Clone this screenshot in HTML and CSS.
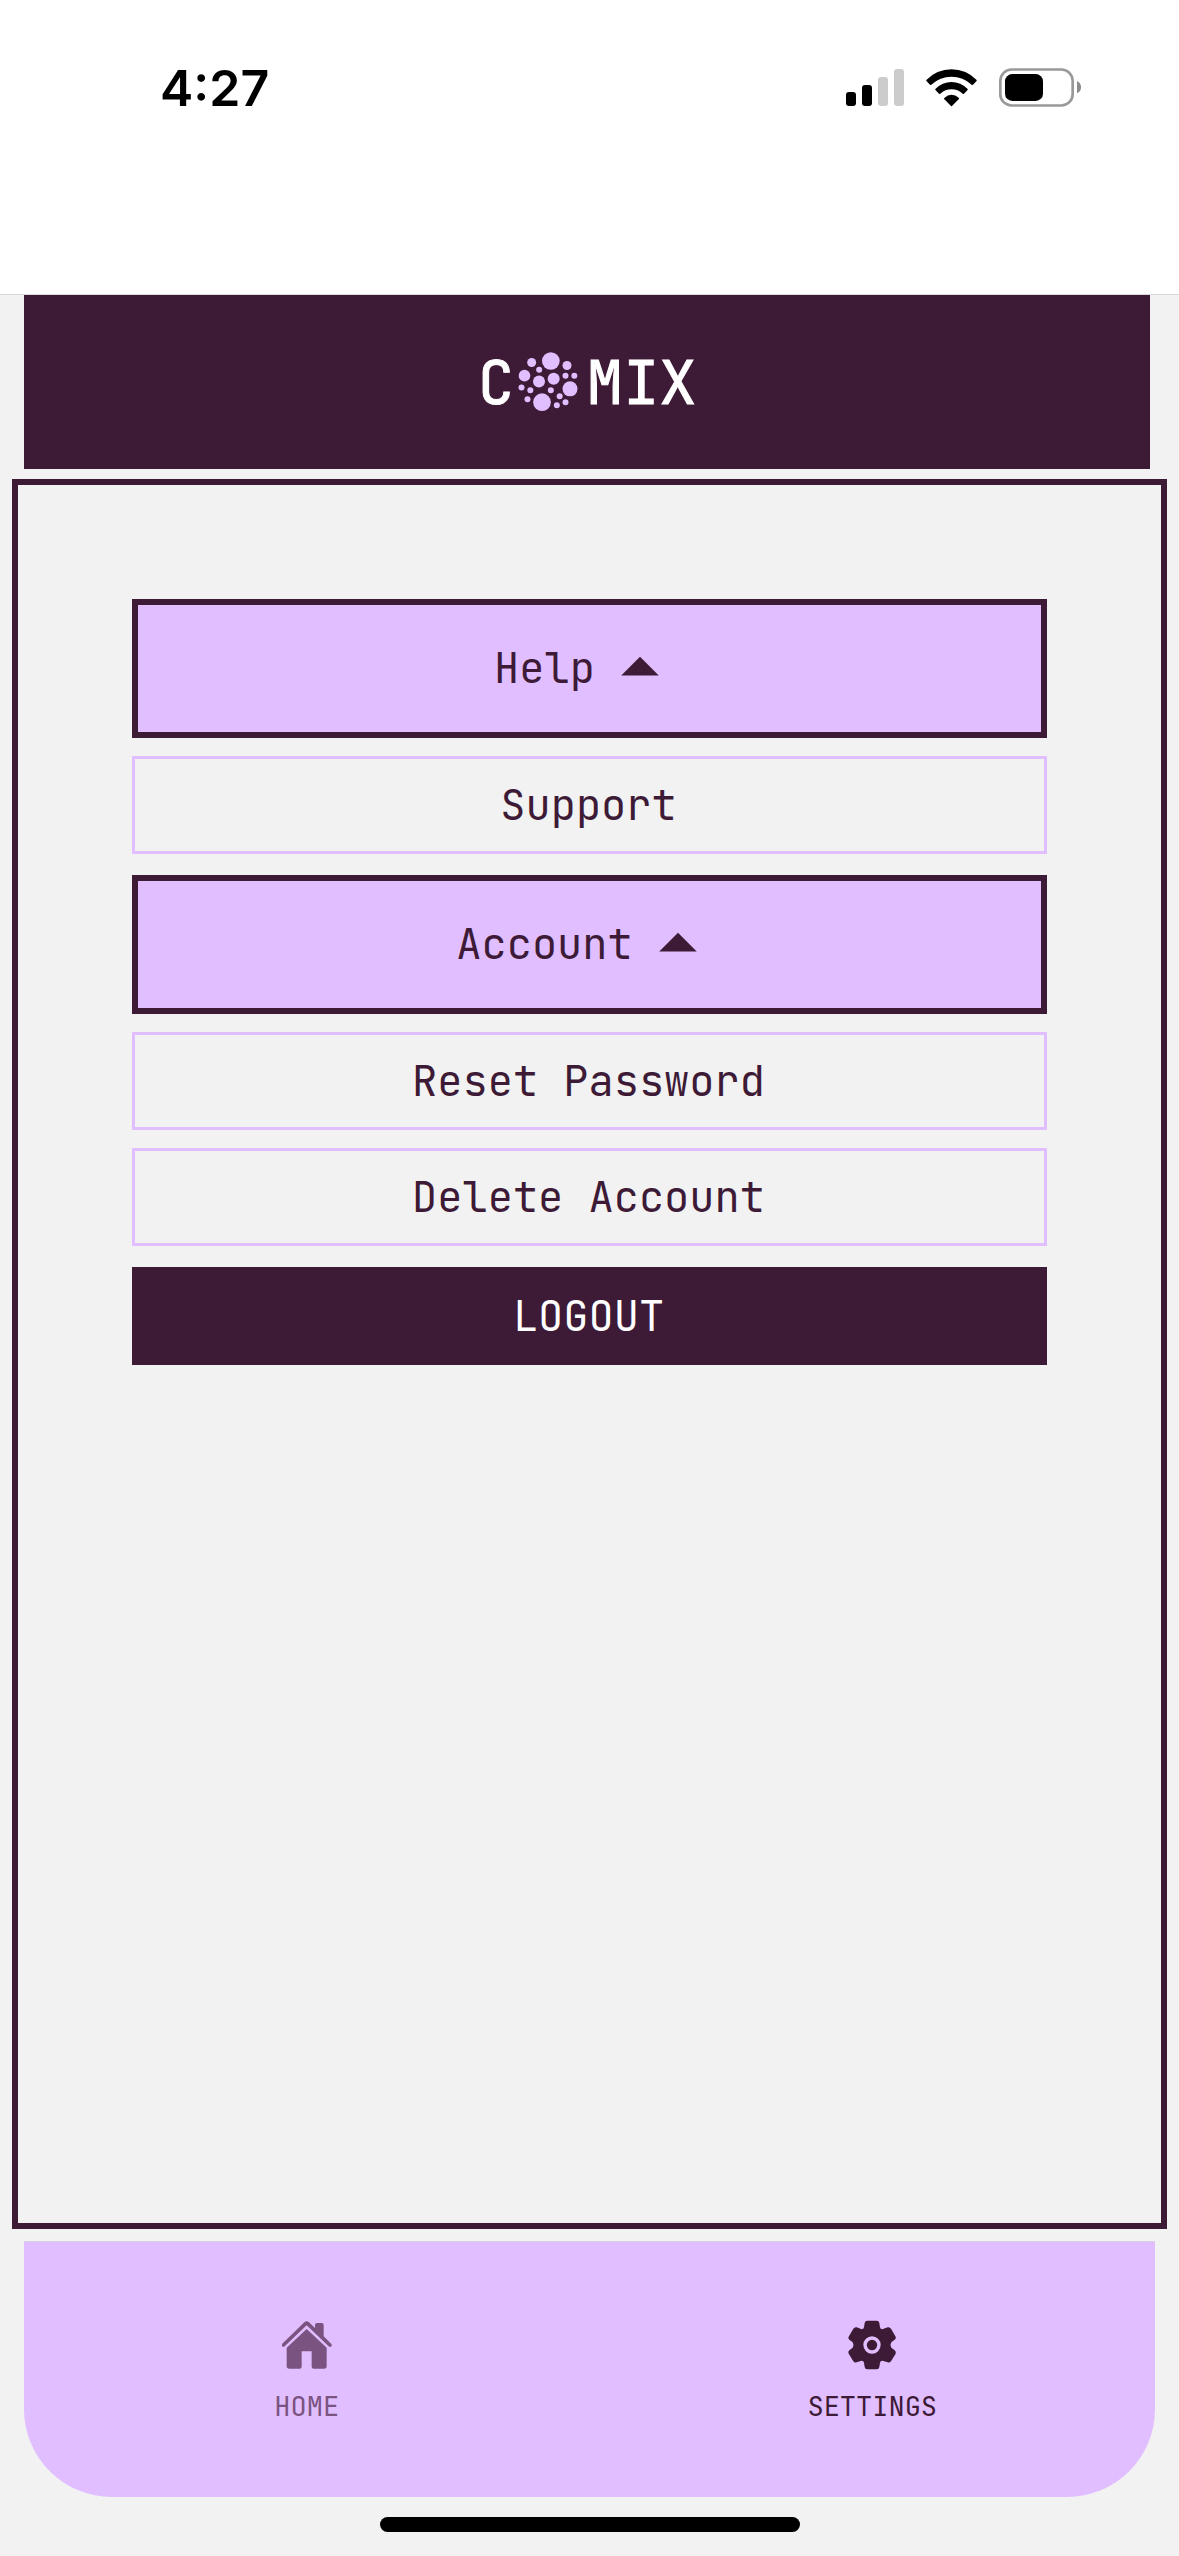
FILE: index.html
```html
<!DOCTYPE html>
<html lang="en">
<head>
<meta charset="utf-8">
<meta name="viewport" content="width=device-width, initial-scale=1">
<title>Comix – Settings</title>
<link rel="stylesheet" href="styles.css">
</head>
<body>
<div class="screen">
  <div class="status-bar">
    <span class="status-time">4:27</span>
    <div class="status-icons">
      <svg class="icon-signal" viewBox="0 0 58 38" aria-hidden="true">
        <rect x="0" y="23" width="10" height="14" rx="3"/>
        <rect x="16" y="16" width="10" height="21" rx="3"/>
        <rect class="signal-off" x="32" y="8" width="10" height="29" rx="3"/>
        <rect class="signal-off" x="48" y="0" width="10" height="37" rx="3"/>
      </svg>
      <svg class="icon-wifi" viewBox="378 86 153 114" aria-hidden="true">
        <path d="M379 119Q411 87 454.500 87T530 119Q531 121 529 123L519 133Q517 135 515 133Q489 109 454.500 109T394 133Q392 135 390 133L380 123Q378 121 379 119Z"/>
        <path d="M406 146Q427 125 454.500 125T503 146Q504 148 502 150L492 160Q490 162 488 160Q474 147 454.500 147T421 160Q419 162 417 160L407 150Q405 148 406 146Z"/>
        <path d="M433 173Q443 163 454.500 163T477 173Q478 175 476 177L456 197Q454.500 199 453 197L433 177Q431 175 433 173Z"/>
      </svg>
      <svg class="icon-battery" viewBox="597 84 246 117" aria-hidden="true">
        <rect class="battery-shell" x="601" y="88.500" width="217" height="108" rx="34"/>
        <rect x="615" y="102" width="114" height="81" rx="22"/>
        <path class="battery-cap" d="M831 123Q843 129 843 141.500T831 160Z"/>
      </svg>
    </div>
  </div>

  <header class="brand">
    <h1 class="logo" aria-label="Comix">
      <span>C</span>
      <svg class="logo-dots" viewBox="178 65 180 180" aria-hidden="true">
        <circle cx="276.500" cy="92" r="26.500"/>
        <circle cx="219" cy="96.500" r="13.500"/>
        <circle cx="325" cy="105.500" r="13.500"/>
        <circle cx="241.500" cy="118.500" r="9"/>
        <circle cx="197.500" cy="136" r="17.500"/>
        <circle cx="285" cy="145" r="18"/>
        <circle cx="320.500" cy="136" r="9"/>
        <circle cx="347" cy="136" r="9"/>
        <circle cx="241" cy="153.500" r="18"/>
        <circle cx="188.500" cy="171.500" r="9"/>
        <circle cx="215" cy="180" r="9"/>
        <circle cx="276.500" cy="180" r="9"/>
        <circle cx="334" cy="175.500" r="22.500"/>
        <circle cx="206.500" cy="206.500" r="9"/>
        <circle cx="250" cy="215.500" r="26.500"/>
        <circle cx="303" cy="198" r="9"/>
        <circle cx="294.500" cy="224.500" r="9"/>
        <circle cx="320.500" cy="215.500" r="9"/>
      </svg>
      <span>MIX</span>
    </h1>
  </header>

  <main class="panel">
    <section class="group">
      <button class="btn btn-group" type="button" aria-expanded="true">Help<svg class="caret" viewBox="0 0 24 24" aria-hidden="true"><path d="M7 14l5-5 5 5z"/></svg></button>
      <button class="btn btn-item" type="button">Support</button>
    </section>
    <section class="group">
      <button class="btn btn-group" type="button" aria-expanded="true">Account<svg class="caret" viewBox="0 0 24 24" aria-hidden="true"><path d="M7 14l5-5 5 5z"/></svg></button>
      <button class="btn btn-item" type="button">Reset Password</button>
      <button class="btn btn-item" type="button">Delete Account</button>
    </section>
    <button class="btn btn-logout" type="button">LOGOUT</button>
  </main>

  <nav class="tabs">
    <a class="tab" href="#home">
      <svg class="tab-icon" viewBox="844 360 150 150" aria-hidden="true">
        <path d="M918 387L978 443V499Q978 506 970 506H939Q933 506 933 500V454H903V500Q903 506 897 506H866Q858 506 858 499V443Z"/>
        <path d="M844 432L911 367Q918 361 925 367L943 384V375Q943 369 949 369H963Q969 369 969 375V409L992 432Q995 436 992 439Q988 442 984 439L918 376L852 439Q848 442 844 439Q841 436 844 432Z"/>
      </svg>
      <span>HOME</span>
    </a>
    <a class="tab tab-active" href="#settings" aria-current="page">
      <svg class="tab-icon" viewBox="201 360 150 150" aria-hidden="true">
        <path fill-rule="evenodd" d="M262 362H290Q297 362 298 369L300 382Q301 388 307 388L323 382Q329 380 333 386L347 410Q349 416 344 419L334 427Q329 435 334 443L344 451Q349 455 347 461L333 484Q329 489 323 487L307 482Q301 482 300 488L298 501Q297 508 290 508H262Q255 508 254 501L252 488Q251 482 245 482L230 487Q224 489 220 484L206 461Q203 455 208 451L218 443Q223 435 218 427L208 419Q203 415 206 410L220 386Q224 380 230 382L245 388Q251 388 252 382L254 369Q255 362 262 362ZM276 409A26 26 0 1 0 276 461A26 26 0 1 0 276 409Z"/>
        <circle cx="276" cy="435" r="15.500"/>
      </svg>
      <span>SETTINGS</span>
    </a>
  </nav>
  <div class="home-indicator"></div>
</div>
</body>
</html>
```
FILE: styles.css
```css
:root {
  --plum: #3d1a36;
  --lavender: #e0beff;
  --surface: #f2f2f2;
  --muted: #7b5380;
  --mono: "JetBrains Mono", "DejaVu Sans Mono", "Liberation Mono", monospace;
}

* {
  box-sizing: border-box;
}

body {
  margin: 0;
  background: var(--surface);
  color: var(--plum);
  font-family: var(--mono);
}

.screen {
  display: flex;
  flex-direction: column;
  min-height: 100vh;
}

.status-bar {
  display: flex;
  justify-content: space-between;
  align-items: flex-start;
  height: 295px;
  padding: 58px 98px 0 160px;
  background: #fff;
  border-bottom: 1px solid #d8d8d8;
  color: #000;
}

.status-time {
  font: 600 50px/60px Inter, "Liberation Sans", sans-serif;
}

.status-icons {
  display: flex;
  align-items: center;
  gap: 22px;
  padding-top: 10px;
}

.icon-signal {
  width: 58px;
  height: 38px;
}

.signal-off {
  fill: #ccc;
}

.icon-wifi {
  width: 51px;
  height: 38px;
}

.icon-battery {
  width: 82px;
  height: 39px;
}

.battery-shell {
  fill: none;
  stroke: #999;
  stroke-width: 8;
}

.battery-cap {
  fill: #8c8c8c;
}

.brand {
  display: flex;
  align-items: center;
  justify-content: center;
  height: 174px;
  margin: 0 29px 10px 24px;
  background: var(--plum);
}

.logo {
  display: flex;
  align-items: center;
  margin: 0;
  color: #fff;
  font-size: 61px;
  font-weight: 400;
  line-height: 72px;
  -webkit-text-stroke: 1px #fff;
}

.logo-dots {
  width: 60px;
  height: 60px;
  margin: 0 8px 0 4px;
  fill: var(--lavender);
}

.panel {
  display: flex;
  flex: 1;
  flex-direction: column;
  gap: 21px;
  margin: 0 12px;
  padding: 114px;
  border: 6px solid var(--plum);
}

.group {
  display: flex;
  flex-direction: column;
  gap: 18px;
}

.btn {
  display: flex;
  align-items: center;
  justify-content: center;
  margin: 0;
  border: 0 solid;
  border-radius: 0;
  background: none;
  color: var(--plum);
  font: 400 42px/48px var(--mono);
  cursor: pointer;
}

.btn-group {
  padding: 18px 0 19px;
  border: 6px solid var(--plum);
  background: var(--lavender);
}

.btn-item {
  padding: 22px 2px 22px 0;
  border: 3px solid var(--lavender);
}

.btn-logout {
  padding: 25px 2px 25px 0;
  background: var(--plum);
  color: #fff;
}

.caret {
  width: 90px;
  height: 90px;
  fill: currentColor;
}

.tabs {
  display: flex;
  height: 256px;
  margin: 12px 24px 20px;
  border-top: 1px solid #d8d0dc;
  border-radius: 0 0 88px 88px;
  background: var(--lavender);
}

.tab {
  display: flex;
  flex: 1;
  flex-direction: column;
  align-items: center;
  gap: 20px;
  padding-top: 78px;
  color: var(--muted);
  font-size: 27px;
  line-height: 32px;
  text-decoration: none;
}

.tab-active {
  color: var(--plum);
}

.tab-icon {
  width: 50px;
  height: 50px;
  fill: currentColor;
}

.home-indicator {
  width: 420px;
  height: 15px;
  margin: 0 auto 24px;
  border-radius: 8px;
  background: #000;
}
```
